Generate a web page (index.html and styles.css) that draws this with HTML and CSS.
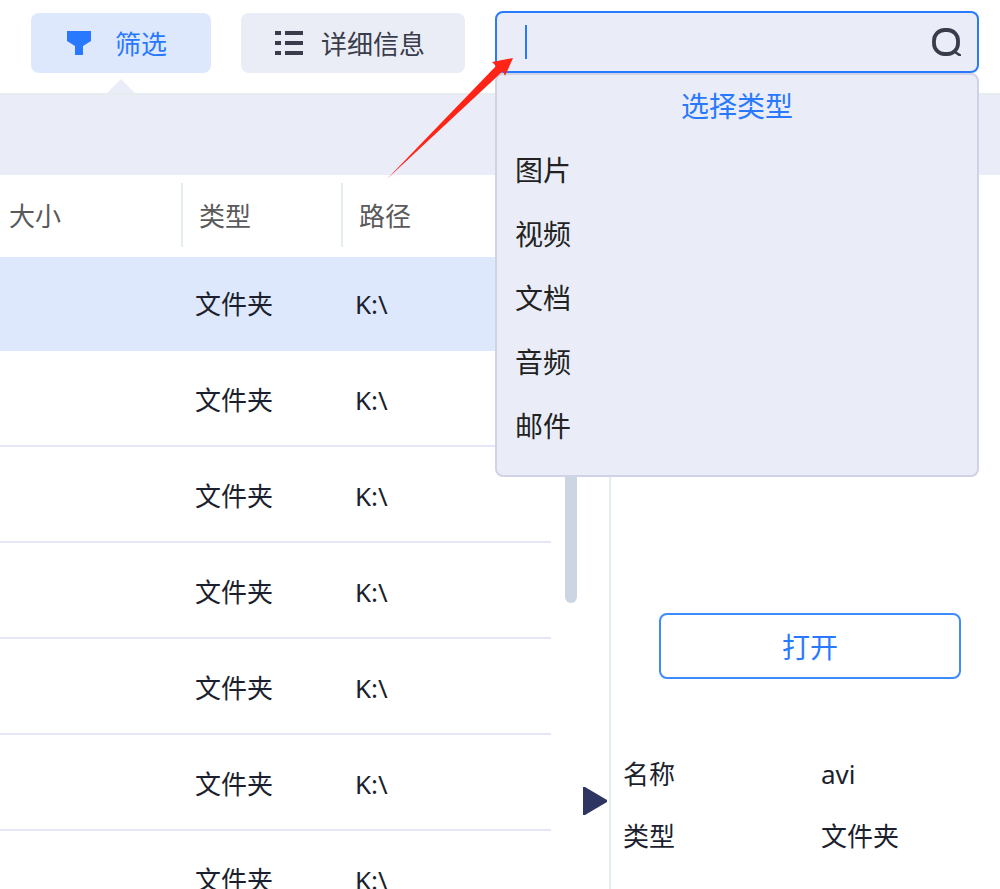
FILE: index.html
```html
<!DOCTYPE html>
<html lang="zh-CN">
<head>
<meta charset="utf-8">
<title>筛选</title>
<link rel="stylesheet" href="styles.css">
</head>
<body>
<div class="page">
  <header class="toolbar">
    <button class="tool tool-active">
      <svg class="tool-icon" viewBox="0 0 24 24"><path d="M0 0h24v10l-8 5v9H8v-9L0 10z"/></svg>
      <span class="tool-label-filter">筛选</span>
    </button>
    <button class="tool tool-plain">
      <svg class="tool-icon list-icon" viewBox="0 0 28 24"><path d="M0 0h6v4H0zM10 0h18v4H10zM0 10h6v4H0zM10 10h18v4H10zM0 20h6v4H0zM10 20h18v4H10z"/></svg>
      <span>详细信息</span>
    </button>
    <div class="search-wrap">
      <div class="search">
        <span class="caret"></span>
        <svg class="search-icon" viewBox="0 0 29 28"><rect x="2" y="2" width="24" height="24" rx="10.5" fill="none" stroke="#393c4a" stroke-width="3.8"/><path d="M23 24l6 4" fill="none" stroke="#393c4a" stroke-width="2.6"/></svg>
      </div>
      <div class="dropdown">
        <div class="dropdown-title">选择类型</div>
        <div class="dropdown-item">图片</div>
        <div class="dropdown-item">视频</div>
        <div class="dropdown-item">文档</div>
        <div class="dropdown-item">音频</div>
        <div class="dropdown-item">邮件</div>
      </div>
    </div>
  </header>
  <div class="band"></div>
  <main class="content">
    <section class="table">
      <div class="thead">
        <div class="th th-size">大小</div>
        <div class="th th-type">类型</div>
        <div class="th th-path">路径</div>
      </div>
      <div class="row row-active"><span class="cell-type">文件夹</span><span class="cell-path">K:\</span></div>
      <div class="row"><span class="cell-type">文件夹</span><span class="cell-path">K:\</span></div>
      <div class="row"><span class="cell-type">文件夹</span><span class="cell-path">K:\</span></div>
      <div class="row"><span class="cell-type">文件夹</span><span class="cell-path">K:\</span></div>
      <div class="row"><span class="cell-type">文件夹</span><span class="cell-path">K:\</span></div>
      <div class="row"><span class="cell-type">文件夹</span><span class="cell-path">K:\</span></div>
      <div class="row"><span class="cell-type">文件夹</span><span class="cell-path">K:\</span></div>
    </section>
    <div class="scroll-track"><div class="scroll-thumb"></div></div>
    <aside class="side">
      <svg class="collapse" viewBox="0 0 24 28"><path d="M0 0h2l22 13v2L2 28H0z"/></svg>
      <button class="open-btn">打开</button>
      <dl class="info">
        <div class="info-row"><dt>名称</dt><dd>avi</dd></div>
        <div class="info-row"><dt>类型</dt><dd>文件夹</dd></div>
      </dl>
    </aside>
  </main>
  <svg class="annotation" viewBox="0 0 1000 889"><polygon points="513,58 492,62 496,66 387,179 503,71 505,76"/></svg>
</div>
</body>
</html>
```
FILE: styles.css
```css
* { box-sizing: border-box; }
html, body { margin: 0; padding: 0; background: #fff; }
body {
  font-family: "Noto Sans", "Noto Sans CJK SC", sans-serif;
  font-size: 26px;
  color: #1c1f2e;
}
.page {
  position: relative;
  width: 1000px;
  height: 889px;
  overflow: hidden;
  display: flex;
  flex-direction: column;
}
.toolbar {
  height: 93px;
  flex: none;
  display: flex;
  align-items: flex-start;
  padding: 13px 0 0 31px;
  gap: 30px;
}
.tool {
  position: relative;
  height: 60px;
  border: 0;
  border-radius: 8px;
  display: flex;
  align-items: center;
  font: inherit;
  padding: 0;
}
.tool-active {
  width: 180px;
  background: #dde8fd;
  color: #2979ff;
  padding-left: 36px;
  gap: 24px;
}
.tool-active::after {
  content: "";
  position: absolute;
  left: 76px;
  top: 66px;
  border-left: 14px solid transparent;
  border-right: 14px solid transparent;
  border-bottom: 14px solid #eaedf7;
}
.tool-plain {
  width: 224px;
  background: #eaedf6;
  color: #393c4a;
  padding-left: 34px;
  gap: 18px;
}
.tool-icon { width: 24px; height: 24px; fill: #2979ff; flex: none; }
.list-icon { width: 28px; fill: #393c4a; }
.search-wrap {
  position: relative;
  width: 484px;
  margin-top: -2px;
}
.search {
  height: 62px;
  background: #eaedf7;
  border: 2px solid #2979ff;
  border-radius: 8px;
  display: flex;
  align-items: center;
  justify-content: space-between;
  padding: 0 16px 0 28px;
}
.caret { width: 2px; height: 34px; background: #2979ff; }
.search-icon { width: 29px; height: 28px; }
.dropdown {
  position: absolute;
  z-index: 2;
  left: 0;
  right: 0;
  top: 62px;
  height: 404px;
  background: #eaedf7;
  border: 2px solid #d0d3e6;
  border-radius: 8px;
  color: #222;
  font-size: 28px;
}
.dropdown-title {
  height: 63px;
  line-height: 62px;
  text-align: center;
  color: #2979ff;
}
.dropdown-item {
  height: 64px;
  line-height: 64px;
  padding-left: 18px;
}
.band {
  height: 82px;
  flex: none;
  background: #eaedf7;
  border-top: 2px solid #e5edef;
}
.content { flex: 1; display: flex; min-height: 0; }
.table { width: 551px; flex: none; }
.thead { height: 82px; display: flex; padding-top: 8px; }
.th {
  height: 64px;
  line-height: 66px;
  color: #5a5a5a;
}
.th-size { width: 183px; padding-left: 9px; border-right: 2px solid #e3edf0; }
.th-type { width: 160px; padding-left: 16px; border-right: 2px solid #e3edf0; }
.th-path { padding-left: 16px; }
.row {
  height: 96px;
  display: flex;
  align-items: flex-start;
  padding: 29px 0 0 195px;
  line-height: 40px;
  border-bottom: 2px solid #e5e7f6;
}
.row-active {
  height: 94px;
  padding-top: 27px;
  border-bottom: 0;
  background: #dde8fd;
}
.cell-type { width: 160px; }
.scroll-track { width: 58px; flex: none; padding-left: 14px; }
.scroll-thumb {
  width: 12px;
  height: 428px;
  background: #ccd5e3;
  border-radius: 0 0 6px 6px;
}
.side {
  position: relative;
  flex: 1;
  border-left: 2px solid #e3edf0;
  padding: 438px 0 0 48px;
}
.collapse {
  position: absolute;
  left: -28px;
  top: 612px;
  width: 24px;
  height: 28px;
  fill: #2f3561;
}
.open-btn {
  display: block;
  width: 302px;
  height: 66px;
  background: #fff;
  border: 2px solid #3d8bfd;
  border-radius: 8px;
  color: #2979ff;
  font: inherit;
  font-size: 28px;
  padding: 0;
}
.info { margin: 64px 0 0 -36px; }
.info-row {
  display: flex;
  height: 62px;
  line-height: 62px;
}
.info dt { width: 198px; }
.info dd { margin: 0; }
.annotation {
  position: absolute;
  left: 0;
  top: 0;
  width: 1000px;
  height: 889px;
  z-index: 3;
  pointer-events: none;
  fill: #ff2416;
}
```
